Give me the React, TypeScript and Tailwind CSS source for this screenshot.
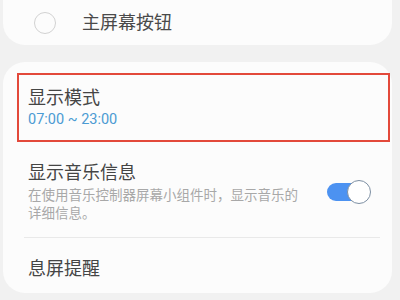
export default function App() {
  return (
    <div
      className="h-[300px] w-[400px] overflow-hidden bg-[#f1f1f1]"
      style={{ fontFamily: "Roboto, 'Noto Sans CJK SC', sans-serif" }}
    >
      {/* top card, cut off by the viewport */}
      <div className="ml-[3px] flex h-[45px] w-[389px] items-center rounded-b-[22px] bg-[#fcfcfc] pl-[31px]">
        <div className="h-[22px] w-[22px] rounded-full border-[1.5px] border-[#d2d2d2]" />
        <span className="ml-[26px] text-[18px] leading-6 text-[#4a4a4a]">主屏幕按钮</span>
      </div>

      <div className="ml-[3px] mt-[17px] flex h-[231px] w-[389px] flex-col rounded-[22px] bg-[#fcfcfc] pt-[11px]">
        {/* highlighted row */}
        <div className="ml-[14px] mr-[2px] flex h-[69px] flex-col justify-center border-2 border-[#e3493b] pl-[9px]">
          <span className="text-[18px] leading-6 text-[#454545]">显示模式</span>
          <span className="text-[14.5px] leading-5 text-[#4b9bd3]">07:00 ~ 23:00</span>
        </div>

        {/* music info row */}
        <div className="mt-[19px] flex items-center pl-[25px] pr-[20px]">
          <div className="flex w-[280px] flex-col">
            <span className="text-[18px] leading-6 text-[#454545]">显示音乐信息</span>
            <span className="mt-[1px] text-[13.5px] leading-[18px] text-[#a8a8a8]">
              在使用音乐控制器屏幕小组件时，显示音乐的详细信息。
            </span>
          </div>
          <div className="ml-auto mr-[3px] flex h-[18px] w-[42px] items-center justify-end rounded-full bg-[#4c92f1]">
            <div className="-mr-[2px] h-[24px] w-[24px] rounded-full border-[1.5px] border-[#7d8fa3] bg-white" />
          </div>
        </div>

        <div className="ml-[21px] mr-[12px] mt-[15px] h-px bg-[#e9e9e9]" />

        <div className="mt-[19px] pl-[25px]">
          <span className="text-[18px] leading-6 text-[#454545]">息屏提醒</span>
        </div>
      </div>
    </div>
  );
}
